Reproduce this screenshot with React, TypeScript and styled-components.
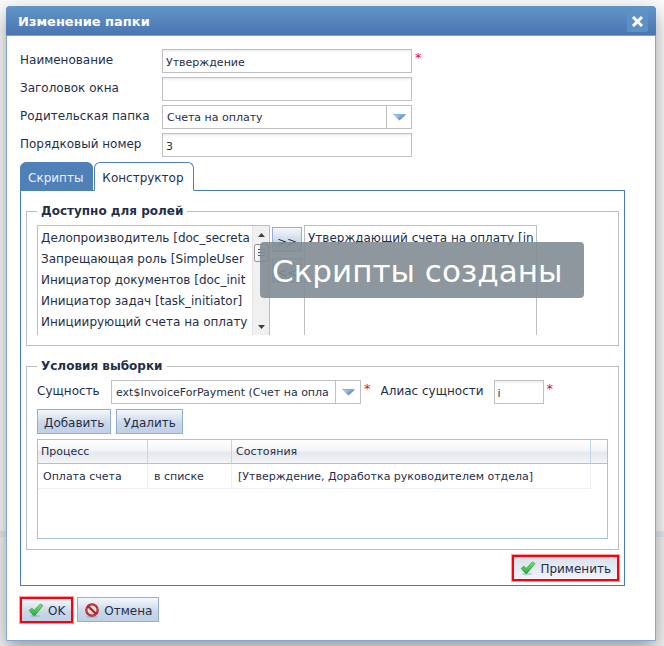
import React from "react";
import styled, { createGlobalStyle, css } from "styled-components";

const GlobalStyle = createGlobalStyle`
  *, *::before, *::after { box-sizing: border-box; }
  body {
    margin: 0;
    background: #f9f9f9;
    color: #1f2f49;
    font: 12px/16px Verdana, "DejaVu Sans", sans-serif;
  }
  input, select, button, table { font: inherit; color: inherit; }
`;

const Page = styled.div`
  position: relative;
  min-height: 100vh;
  padding: 6px 8px 5px 6px;
  background: linear-gradient(#fbfbfb 0, #fbfbfb 531px, #e6ebef 531px, #e6ebef 537px, #f4f4f4 537px);
`;

const Window = styled.section`
  position: relative;
  border: 1px solid #86a5d3;
  border-radius: 4px 4px 0 0;
  background: #fff;
  box-shadow: 0 8px 20px rgba(0, 0, 0, 0.38);
`;

const TitleBar = styled.header`
  display: flex;
  align-items: center;
  justify-content: space-between;
  height: 30px;
  margin: -1px -1px 0;
  padding: 0 8px 0 12px;
  border-bottom: 1px solid #7f9fcf;
  border-radius: 4px 4px 0 0;
  background: linear-gradient(#6295c7, #4b75b2);
  color: #fff;
`;

const Title = styled.h1`
  margin: 2px 0 0;
  font-size: 13px;
  line-height: 16px;
`;

const CloseButton = styled.button`
  display: grid;
  place-items: center;
  width: 21px;
  height: 21px;
  margin-top: 2px;
  padding: 0;
  border: 0;
  border-radius: 2px;
  background: #5f90c3;
`;

const Body = styled.div`
  padding: 13px 30px 17px 13px;
`;

const Form = styled.div`
  display: grid;
  grid-template-columns: 142px 1fr;
  row-gap: 4px;
`;

const Label = styled.label`
  padding-top: 2px;
  line-height: 18px;
  white-space: nowrap;
`;

const Field = styled.div`
  display: flex;
  gap: 3px;
`;

const TextInput = styled.input<{ $width: number }>`
  width: ${(p) => p.$width}px;
  height: 24px;
  padding: 2px 3px 0;
  border: 1px solid #bfc0c2;
  border-radius: 0;
  outline: 0;
  background: linear-gradient(#ebebeb, #fff 3px);
  font-size: 11px;
`;

const Required = styled.span`
  color: #f0002c;
  font-size: 13px;
  line-height: 18px;
`;

const Combo = styled.div`
  position: relative;
  width: 250px;
  height: 24px;
  svg {
    position: absolute;
    right: 6px;
    top: 9px;
    pointer-events: none;
  }
  &::after {
    content: "";
    position: absolute;
    inset: 0 25px 0 auto;
    border-left: 1px solid #bfc0c2;
    pointer-events: none;
  }
`;

const ComboSelect = styled.select`
  appearance: none;
  width: 100%;
  height: 100%;
  padding: 2px 25px 0 4px;
  border: 1px solid #bfc0c2;
  border-radius: 0;
  background: #fff;
  font-size: 11px;
`;

const Tabs = styled.div`
  display: flex;
  gap: 1px;
  margin-top: 5px;
`;

const Tab = styled.button<{ $active?: boolean }>`
  height: 29px;
  margin-bottom: -1px;
  padding: 2px 9px 0 7px;
  border: 1px solid #5080b8;
  border-radius: 6px 6px 0 0;
  background: #5080b8;
  color: #eaf2fb;
  ${(p) =>
    p.$active &&
    css`
      border-bottom-color: #fff;
      background: #fff;
      color: #1f2f49;
    `}
`;

const TabPanel = styled.div`
  padding: 12px 5px 4px;
  border: 1px solid #4a7db8;
`;

const Group = styled.fieldset`
  min-width: 0;
  margin: 0 0 12px;
  padding: 6px 10px 10px;
  border: 1px solid #bcbfc0;
`;

const LastGroup = styled(Group)`
  margin-bottom: 5px;
`;

const Legend = styled.legend`
  padding: 0 4px;
  font-weight: bold;
`;

const Roles = styled.div`
  display: flex;
  gap: 2px;
`;

const ListFrame = styled.div`
  display: flex;
  width: 233px;
  height: 110px;
  border: 1px solid #bcbfc0;
  border-bottom: 0;
`;

const List = styled.select`
  flex: 1;
  min-width: 0;
  height: 109px;
  padding: 2px 0 0;
  border: 0;
  border-radius: 0;
  outline: 0;
  overflow: hidden;
  background: transparent;
  scrollbar-width: none;
  option {
    min-height: 21px;
    padding: 3px 0 2px 3px;
    line-height: 16px;
  }
`;

const ScrollTrack = styled.div`
  display: flex;
  flex-direction: column;
  align-items: center;
  width: 17px;
  padding: 7px 0 6px;
  border-left: 1px solid #e3e3e3;
  background: #f0f0f0;
`;

const ScrollThumb = styled.div`
  display: grid;
  place-items: center;
  width: 15px;
  height: 18px;
  margin: 7px 0 auto;
  border: 1px solid #959595;
  border-radius: 2px;
  background: linear-gradient(90deg, #fafafa, #d5d5d8);
`;

const Movers = styled.div`
  display: flex;
  flex-direction: column;
  gap: 6px;
  padding-top: 2px;
`;

const Button = styled.button<{ $framed?: boolean; $hover?: boolean }>`
  display: inline-flex;
  align-items: center;
  justify-content: center;
  gap: 4px;
  height: 25px;
  padding: 2px 6px 0;
  border: 1px solid #93aed0;
  border-radius: 0;
  background: ${(p) =>
    p.$hover ? "linear-gradient(#dbe1ea, #f1f2f9)" : "linear-gradient(#f5f8fb, #c9d6e8 60%, #c0d0e7)"};
  white-space: nowrap;
  ${(p) =>
    p.$framed &&
    css`
      height: 26px;
      border: 2px solid #f8000c;
      box-shadow: 0 0 0 1px #ffa0a0;
    `}
`;

const MoveButton = styled(Button)`
  width: 30px;
  padding: 4px 0 0;
`;

const Filter = styled.div`
  display: flex;
  align-items: flex-start;
  gap: 3px;
`;

const FilterLabel = styled(Label)<{ $width: number; $indent?: boolean }>`
  width: ${(p) => p.$width}px;
  margin-left: ${(p) => (p.$indent ? 7 : 0)}px;
`;

const Toolbar = styled.div`
  display: flex;
  gap: 5px;
  margin: 5px 0;
`;

const Grid = styled.div`
  height: 100px;
  border: 1px solid #a5c2df;
`;

const Table = styled.table`
  width: 100%;
  table-layout: fixed;
  border-collapse: separate;
  border-spacing: 0;
  font-size: 11px;
  th {
    height: 24px;
    padding: 1px 4px 0 3px;
    border-right: 1px solid #c5d5e8;
    border-bottom: 1px solid #a5c2df;
    background: linear-gradient(#fff, #f4f5f8 45%, #e5e8ed 55%, #f2f4f7);
    font-weight: normal;
    text-align: left;
  }
  th:nth-child(3) { padding-left: 4px; }
  th:last-child { border-right: 0; }
  td {
    height: 25px;
    padding: 2px 6px 0;
    border-right: 1px solid #eef0f8;
    border-bottom: 1px solid #eef0f8;
    white-space: nowrap;
  }
  td:first-child { padding-left: 5px; }
  td:last-child { border: 0; }
`;

const Actions = styled.div<{ $end?: boolean }>`
  display: flex;
  align-items: flex-start;
  gap: 4px;
  justify-content: ${(p) => (p.$end ? "flex-end" : "flex-start")};
`;

const Footer = styled(Actions)`
  margin-top: 11px;
`;

const Toast = styled.div`
  position: absolute;
  left: 260px;
  top: 242px;
  padding: 9px 21px 7px 12px;
  border-radius: 4px;
  background: rgba(130, 141, 147, 0.91);
  color: #fff;
  font-size: 31px;
  line-height: 40px;
  white-space: nowrap;
`;

const ComboArrow = () => (
  <svg width="13" height="7" viewBox="0 0 13 7" aria-hidden="true">
    <defs>
      <linearGradient id="arrowFill" x1="0" y1="0" x2="1" y2="0.6">
        <stop offset="0" stopColor="#cfe4fb" />
        <stop offset="1" stopColor="#4478ba" />
      </linearGradient>
    </defs>
    <path d="M0 0.5H13L6.5 6.5Z" fill="url(#arrowFill)" />
    <path d="M0.5 0.5H12.5" stroke="#83aedd" />
  </svg>
);

const ScrollArrow = ({ down }: { down?: boolean }) => (
  <svg width="7" height="4" viewBox="0 0 7 4" aria-hidden="true">
    <path d={down ? "M0 0H7L3.5 4Z" : "M0 4H7L3.5 0Z"} fill="#404040" />
  </svg>
);

const CheckIcon = () => (
  <svg width="16" height="16" viewBox="0 0 16 16" aria-hidden="true">
    <defs>
      <linearGradient id="checkFill" x1="0" y1="0" x2="0" y2="1">
        <stop offset="0" stopColor="#7be67a" />
        <stop offset="1" stopColor="#22b035" />
      </linearGradient>
    </defs>
    <ellipse cx="7" cy="13" rx="5" ry="1.2" fill="#8b98a5" opacity="0.4" />
    <path d="M1.2 7.4L3.8 5.2L6.3 7.4L12.4 1L14.8 2.6L6.9 12.4H5.6Z" fill="url(#checkFill)" stroke="#259a3c" strokeWidth="0.8" strokeLinejoin="round" />
  </svg>
);

const BanIcon = () => (
  <svg width="16" height="16" viewBox="0 0 16 16" aria-hidden="true">
    <ellipse cx="8" cy="13.6" rx="5.5" ry="1.2" fill="#8b98a5" opacity="0.5" />
    <circle cx="8" cy="7" r="5.7" fill="#ecdfe3" stroke="#a51d24" strokeWidth="2.2" />
    <circle cx="8" cy="7" r="5.8" fill="none" stroke="#cd4348" strokeWidth="1" />
    <path d="M4 3.1L12 10.9" stroke="#b3262c" strokeWidth="2.2" />
  </svg>
);

const availableRoles = [
  "Делопроизводитель [doc_secreta",
  "Запрещающая роль [SimpleUser",
  "Инициатор документов [doc_init",
  "Инициатор задач [task_initiator]",
  "Инициирующий счета на оплату",
];

export default function App() {
  return (
    <Page>
      <GlobalStyle />
      <Window role="dialog" aria-labelledby="title">
        <TitleBar>
          <Title id="title">Изменение папки</Title>
          <CloseButton aria-label="Закрыть">
            <svg width="13" height="13" viewBox="0 0 13 13" aria-hidden="true">
              <path d="M2 2L11 11M11 2L2 11" stroke="#fff" strokeWidth="3" />
            </svg>
          </CloseButton>
        </TitleBar>
        <Body>
          <Form>
            <Label htmlFor="name">Наименование</Label>
            <Field>
              <TextInput id="name" $width={250} defaultValue="Утверждение" required />
              <Required>*</Required>
            </Field>
            <Label htmlFor="caption">Заголовок окна</Label>
            <Field>
              <TextInput id="caption" $width={250} />
            </Field>
            <Label htmlFor="parent">Родительская папка</Label>
            <Combo>
              <ComboSelect id="parent">
                <option>Счета на оплату</option>
              </ComboSelect>
              <ComboArrow />
            </Combo>
            <Label htmlFor="order">Порядковый номер</Label>
            <Field>
              <TextInput id="order" $width={250} defaultValue="3" />
            </Field>
          </Form>

          <Tabs role="tablist">
            <Tab role="tab" aria-selected={false}>Скрипты</Tab>
            <Tab role="tab" aria-selected $active>Конструктор</Tab>
          </Tabs>
          <TabPanel role="tabpanel">
            <Group>
              <Legend>Доступно для ролей</Legend>
              <Roles>
                <ListFrame>
                  <List multiple size={5} aria-label="Доступные роли">
                    {availableRoles.map((role) => (
                      <option key={role}>{role}</option>
                    ))}
                  </List>
                  <ScrollTrack aria-hidden="true">
                    <ScrollArrow />
                    <ScrollThumb>
                      <svg width="7" height="8" viewBox="0 0 7 8">
                        <path d="M0 0.5H7M0 3.5H7M0 6.5H7" stroke="#555" />
                      </svg>
                    </ScrollThumb>
                    <ScrollArrow down />
                  </ScrollTrack>
                </ListFrame>
                <Movers>
                  <MoveButton>&gt;&gt;</MoveButton>
                  <MoveButton>&lt;&lt;</MoveButton>
                </Movers>
                <ListFrame>
                  <List multiple size={5} aria-label="Выбранные роли">
                    <option>Утверждающий счета на оплату [in</option>
                  </List>
                </ListFrame>
              </Roles>
            </Group>

            <LastGroup>
              <Legend>Условия выборки</Legend>
              <Filter>
                <FilterLabel htmlFor="entity" $width={71}>Сущность</FilterLabel>
                <Combo>
                  <ComboSelect id="entity">
                    <option>ext$InvoiceForPayment (Счет на опла</option>
                  </ComboSelect>
                  <ComboArrow />
                </Combo>
                <Required>*</Required>
                <FilterLabel htmlFor="alias" $width={110} $indent>Алиас сущности</FilterLabel>
                <TextInput id="alias" $width={50} defaultValue="i" />
                <Required>*</Required>
              </Filter>
              <Toolbar>
                <Button>Добавить</Button>
                <Button>Удалить</Button>
              </Toolbar>
              <Grid>
                <Table>
                  <colgroup>
                    <col style={{ width: 110 }} />
                    <col style={{ width: 84 }} />
                    <col />
                    <col style={{ width: 16 }} />
                  </colgroup>
                  <thead>
                    <tr>
                      <th scope="col">Процесс</th>
                      <th scope="col" aria-label="Условие" />
                      <th scope="col">Состояния</th>
                      <th aria-hidden="true" />
                    </tr>
                  </thead>
                  <tbody>
                    <tr>
                      <td>Оплата счета</td>
                      <td>в списке</td>
                      <td>[Утверждение, Доработка руководителем отдела]</td>
                      <td />
                    </tr>
                  </tbody>
                </Table>
              </Grid>
            </LastGroup>
            <Actions $end>
              <Button $framed $hover>
                <CheckIcon />
                Применить
              </Button>
            </Actions>
          </TabPanel>
          <Footer>
            <Button $framed>
              <CheckIcon />
              OK
            </Button>
            <Button>
              <BanIcon />
              Отмена
            </Button>
          </Footer>
        </Body>
      </Window>
      <Toast role="status">Скрипты созданы</Toast>
    </Page>
  );
}
